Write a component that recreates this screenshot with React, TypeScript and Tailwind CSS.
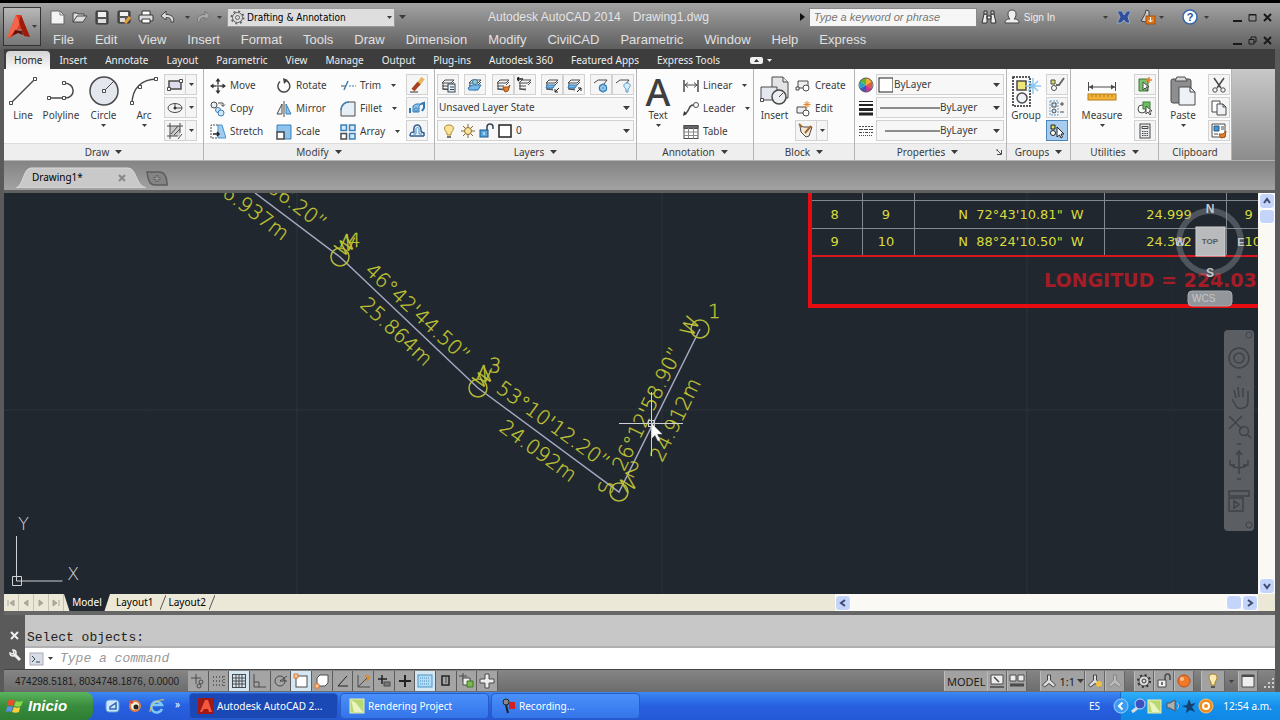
import type { ReactNode } from "react";

type IconProps = {
    w?: number;
    h?: number;
    children: ReactNode;
};

function Icon({ w = 16, h = 16, children }: IconProps) {
    return (
        <svg
            width={w}
            height={h}
            viewBox={`0 0 ${w} ${h}`}
            fill="none"
            stroke="#4a4a4a"
            aria-hidden="true"
            className="shrink-0"
        >
            {children}
        </svg>
    );
}

function Caret({ small = false }: { small?: boolean }) {
    return small ? (
        <Icon w={5} h={3}>
            <path d="M0 0h5L2.500 3z" fill="#3c3c3c" stroke="none" />
        </Icon>
    ) : (
        <Icon w={7} h={4}>
            <path d="M0 0h7L3.500 4z" fill="#3c3c3c" stroke="none" />
        </Icon>
    );
}

/* ---------- Title bar ---------- */

const menus = [
    "File", "Edit", "View", "Insert", "Format", "Tools", "Draw", "Dimension",
    "Modify", "CivilCAD", "Parametric", "Window", "Help", "Express",
];

function QuickAccess() {
    return (
        <div className="flex items-center">
            <button aria-label="New" className="flex w-[22px] justify-center">
                <Icon>
                    <path d="M1 2h9l4 4v9H1z" fill="#f4f4f4" stroke="#666" />
                    <path d="M10 2v4h4" stroke="#777" />
                </Icon>
            </button>
            <button aria-label="Open" className="flex w-[22px] justify-center">
                <Icon>
                    <path d="M1 13V4h4l1 1h6v2M1 13l4-6h10l-4 6z" fill="#ddd" stroke="#444" />
                </Icon>
            </button>
            <button aria-label="Save" className="flex w-[22px] justify-center">
                <Icon>
                    <rect x="2" y="2" width="12" height="13" rx="1" fill="#555" stroke="#333" />
                    <rect x="4" y="3" width="8" height="5" fill="#f0f0f0" stroke="none" />
                    <rect x="4" y="10" width="8" height="4" fill="#ddd" stroke="none" />
                </Icon>
            </button>
            <button aria-label="Save As" className="flex w-[22px] justify-center">
                <Icon>
                    <rect x="2" y="2" width="12" height="12" rx="1" fill="#555" stroke="#333" />
                    <rect x="4" y="3" width="8" height="4" fill="#f0f0f0" stroke="none" />
                    <rect x="4" y="9" width="5" height="4" fill="#ddd" stroke="none" />
                    <path d="M9 14l5-6" stroke="#e0a040" strokeWidth="3" />
                </Icon>
            </button>
            <button aria-label="Plot" className="flex w-[22px] justify-center">
                <Icon>
                    <path d="M4 6V2h8v4" fill="#fff" stroke="#333" />
                    <rect x="1" y="6" width="14" height="6" rx="1" fill="#ddd" stroke="#333" />
                    <path d="M4 10h8v4H4z" fill="#fff" stroke="#333" />
                </Icon>
            </button>
            <button aria-label="Undo" className="flex w-[22px] justify-center">
                <Icon>
                    <path d="M6 2L1 7l5 4V8.500c4 0 5 1 5 4.500h2.500c1-5-2-7.500-7.500-7.500z" fill="#ddd" stroke="#444" />
                </Icon>
            </button>
            <span className="flex w-4 justify-center"><Caret small /></span>
            <button aria-label="Redo" className="flex w-4 justify-center">
                <Icon>
                    <path d="M10 2l5 5-5 4V8.500c-4 0-5 1-5 4.500H2.500c-1-5 2-7.500 7.500-7.500z" fill="#a8a8a8" stroke="#777" />
                </Icon>
            </button>
            <span className="flex w-4 justify-center"><Caret small /></span>
        </div>
    );
}

function WindowButtons({ restore = false }: { restore?: boolean }) {
    return (
        <div className="flex gap-[6px]">
            <button aria-label="Minimize">
                <Icon w={9} h={9}><path d="M0 8h9" stroke="#1a1a1a" strokeWidth="2" /></Icon>
            </button>
            <button aria-label={restore ? "Restore" : "Maximize"}>
                <Icon w={9} h={9}>
                    {restore ? (
                        <path d="M3 3V1h5v5H6M1 3.500h5v4.500H1z" stroke="#1a1a1a" />
                    ) : (
                        <path d="M1 2h7M1 1.500h7v6.500H1z" stroke="#1a1a1a" />
                    )}
                </Icon>
            </button>
            <button aria-label="Close">
                <Icon w={9} h={9}><path d="M1 1l7 7M8 1L1 8" stroke="#1a1a1a" strokeWidth="2" /></Icon>
            </button>
        </div>
    );
}

function TitleBar() {
    return (
        <header className="flex h-[46px] bg-linear-to-b from-[#a4a4a4] to-[#5e5e5e] pl-[3px]">
            <button
                aria-label="Application menu"
                className="mt-1 flex h-[39px] w-[38px] shrink-0 items-center justify-center gap-px border border-[#333] bg-linear-to-b from-[#b8b8b8] to-[#777]"
            >
                <svg width="24" height="28" viewBox="0 0 24 28" aria-hidden="true">
                    <path d="M9 2h5l3 8-2 6-6 1-4 7-5 1z" fill="#e23a22" />
                    <path d="M9 2l4 8-3 6-8 8-2 1z" fill="#f4664c" />
                    <path d="M14 2l9 22-6-1-2-5-3-9z" fill="#a01a0a" />
                    <path d="M8 17l7 1 1 4-5-2-6 3z" fill="#6c0c04" />
                </svg>
                <Caret small />
            </button>
            <div className="flex min-w-0 flex-1 flex-col">
                <div className="flex h-[28px] items-center">
                    <div className="flex w-[447px] shrink-0 items-center pl-[6px]">
                        <QuickAccess />
                        <label className="flex h-[19px] w-[168px] items-center gap-[2px] border border-[#999] bg-[#dedede] px-[2px]">
                            <Icon w={15} h={15}>
                                <circle cx="7.500" cy="7.500" r="5" stroke="#666" />
                                <circle cx="7.500" cy="7.500" r="6" stroke="#666" strokeWidth="2" strokeDasharray="2 2.700" />
                                <circle cx="7.500" cy="7.500" r="2" stroke="#666" />
                            </Icon>
                            <select aria-label="Workspace" className="min-w-0 flex-1 appearance-none bg-transparent font-['DejaVu_Sans_Condensed','Liberation_Sans',sans-serif] text-[10px] text-black">
                                <option>Drafting &amp; Annotation</option>
                            </select>
                            <Caret small />
                        </label>
                        <span className="ml-1"><Caret /></span>
                    </div>
                    <h1 className="flex shrink-0 gap-3 text-[12px] text-[#e4e4e4]">
                        <span>Autodesk AutoCAD 2014</span>
                        <span>Drawing1.dwg</span>
                    </h1>
                    <div className="flex flex-1 items-center justify-end pr-2">
                        <Icon w={5} h={8}><path d="M0 0v8l5-4z" fill="#111" stroke="none" /></Icon>
                        <input
                            aria-label="Search"
                            placeholder="Type a keyword or phrase"
                            className="ml-1 h-[19px] w-[168px] border border-[#888] bg-[#f6f6f6] px-1 text-[11px] italic placeholder:text-[#777]"
                        />
                        <button aria-label="Find" className="ml-1">
                            <Icon>
                                <path d="M1 14l2-9h3v9zM15 14l-2-9h-3v9zM6 7h4v3H6z" fill="#eee" stroke="#333" />
                                <path d="M3 2h3v3H3zM10 2h3v3h-3z" fill="#ccc" stroke="#333" />
                            </Icon>
                        </button>
                        <button className="ml-[7px] flex items-center gap-1 text-[10px] text-[#f0f0f0]">
                            <Icon>
                                <path d="M8 1c6 0 4 8 2 9 4 0 5 2 5 4H1c0-2 1-4 5-4C4 9 2 1 8 1z" fill="#eee" stroke="#444" />
                            </Icon>
                            Sign In
                        </button>
                        <span className="ml-[48px]"><Caret small /></span>
                        <button aria-label="Exchange" className="ml-2">
                            <Icon>
                                <path d="M1 2h5l2 4 3-4h4l-3 6 2 6h-4l-2-3-3 3H1l3-6z" fill="#2f4f9c" stroke="#9ab" />
                            </Icon>
                        </button>
                        <button aria-label="Updates" className="ml-2 mr-[2px]">
                            <Icon w={17}>
                                <path d="M6 1l3 1v5l-3 6-5-1 4-7z" fill="#ccc" stroke="#444" />
                                <rect x="6" y="7" width="9" height="8" fill="#e07818" stroke="#a85008" />
                                <path d="M10.500 8v5M8.500 11l2 2 2-2" stroke="#fff" />
                            </Icon>
                        </button>
                        <Caret small />
                        <button aria-label="Help" className="ml-[18px] mr-[6px]">
                            <svg width="16" height="16" viewBox="0 0 16 16" aria-hidden="true">
                                <circle cx="8" cy="8" r="7" fill="#fff" stroke="#3a66a8" strokeWidth="1.500" />
                                <text x="8" y="12" textAnchor="middle" fontSize="11" fontWeight="700" fill="#1f4f9a">?</text>
                            </svg>
                        </button>
                        <Caret small />
                        <span className="ml-[24px]"><WindowButtons /></span>
                    </div>
                </div>
                <nav className="flex h-[18px] items-center pl-3 pr-2">
                    <div className="flex flex-1 gap-[21px]">
                        {menus.map((item) => (
                            <button key={item} className="text-[13px] leading-4 text-[#e0e0e0]">
                                {item}
                            </button>
                        ))}
                    </div>
                    <WindowButtons restore />
                </nav>
            </div>
        </header>
    );
}

/* ---------- Ribbon ---------- */

const ribbonTabs = [
    "Home", "Insert", "Annotate", "Layout", "Parametric", "View", "Manage",
    "Output", "Plug-ins", "Autodesk 360", "Featured Apps", "Express Tools",
];

function RibbonTabs() {
    return (
        <nav className="flex h-5 items-end bg-[#3d3d3d] pl-[2px]">
            {ribbonTabs.map((tab) => (
                <button
                    key={tab}
                    className={
                        tab === "Home"
                            ? "h-[18px] rounded-t-sm bg-linear-to-b from-[#d4d4d4] to-[#fbfbfb] px-2 text-[#222]"
                            : "h-[18px] px-[9px] text-[#eee]"
                    }
                >
                    {tab}
                </button>
            ))}
            <button aria-label="Minimize ribbon" className="ml-[21px] flex h-[18px] items-center gap-1">
                <Icon w={13} h={7}>
                    <rect width="13" height="7" rx="2" fill="#eee" stroke="none" />
                    <path d="M4 5h5L6.500 2z" fill="#333" stroke="none" />
                </Icon>
                <Icon w={5} h={3}><path d="M0 0h5L2.500 3z" fill="#eee" stroke="none" /></Icon>
            </button>
        </nav>
    );
}

type PanelProps = {
    title: string;
    className: string;
    caret?: boolean;
    launcher?: boolean;
    children: ReactNode;
};

function Panel({ title, className, caret = true, launcher = false, children }: PanelProps) {
    return (
        <section className={`flex shrink-0 flex-col border-r border-[#b4b4b4] bg-[#fcfcfc] ${className}`}>
            <div className="flex h-[74px] pt-[5px]">{children}</div>
            <div className="flex h-[17px] items-center border-t border-[#dcdcdc] bg-[#eeeeee] px-1">
                <h2 className="flex flex-1 items-center justify-center gap-[6px]">
                    {title}
                    {caret && <Caret />}
                </h2>
                {launcher && (
                    <Icon w={6} h={6}><path d="M0 1h2M5.500 1v4.500H1M1 1l4 4" /></Icon>
                )}
            </div>
        </section>
    );
}

type BigButtonProps = {
    label: string;
    className: string;
    caret?: boolean;
    children: ReactNode;
};

function BigButton({ label, className, caret = false, children }: BigButtonProps) {
    return (
        <button className={`flex shrink-0 flex-col items-center ${className}`}>
            <span className="flex h-[34px] items-center">{children}</span>
            <span className="h-[15px] leading-[15px]">{label}</span>
            {caret && <span className="mt-px"><Caret small /></span>}
        </button>
    );
}

type ToolProps = {
    label: string;
    caret?: boolean;
    children: ReactNode;
};

function Tool({ label, caret = false, children }: ToolProps) {
    return (
        <button className="flex h-[23px] items-center gap-1 whitespace-nowrap">
            <span className="flex w-4 justify-center">{children}</span>
            {label}
            {caret && <span className="ml-[6px]"><Caret small /></span>}
        </button>
    );
}

type BoxButtonProps = {
    label: string;
    split?: boolean;
    active?: boolean;
    children: ReactNode;
};

function BoxButton({ label, split = false, active = false, children }: BoxButtonProps) {
    return (
        <button
            aria-label={label}
            className={`flex h-[21px] shrink-0 items-center border ${
                active ? "border-[#4a86b8] bg-[#a6cdf0]" : "border-[#d2d2d2] bg-[#f5f5f5]"
            }`}
        >
            <span className="flex w-5 justify-center">{children}</span>
            {split && (
                <span className="flex h-full w-[11px] items-center justify-center border-l border-[#d2d2d2]">
                    <Caret small />
                </span>
            )}
        </button>
    );
}

type DropdownProps = {
    label: string;
    value: string;
    className?: string;
    children?: ReactNode;
};

function Dropdown({ label, value, className = "", children }: DropdownProps) {
    return (
        <label className={`flex h-[21px] min-w-0 items-center border border-[#d2d2d2] bg-[#f7f7f7] pl-px pr-[3px] ${className}`}>
            {children}
            <select aria-label={label} className="min-w-0 flex-1 appearance-none bg-transparent">
                <option>{value}</option>
            </select>
            <Caret />
        </label>
    );
}

function DrawPanel() {
    return (
        <Panel title="Draw" className="w-[200px]">
            <BigButton label="Line" className="w-[38px]">
                <Icon w={30} h={30}>
                    <path d="M3 27L27 3" strokeWidth="1.500" />
                    <path d="M1.500 25.500h3v3h-3zM25.500 1.500h3v3h-3z" fill="#fff" />
                </Icon>
            </BigButton>
            <BigButton label="Polyline" className="w-[38px]">
                <Icon w={30} h={30}>
                    <path d="M3 22h16c11 0 11-15-1-15" strokeWidth="1.500" />
                    <path d="M1.500 20.500h3v3h-3zM16.500 20.500h3v3h-3zM16.500 5.500h3v3h-3z" fill="#fff" />
                </Icon>
            </BigButton>
            <BigButton label="Circle" caret className="w-[47px]">
                <Icon w={30} h={30}>
                    <circle cx="15" cy="15" r="14" fill="#e4e8ee" strokeWidth="1.500" />
                    <path d="M15 15L25 5" />
                    <path d="M13.500 13.500h3v3h-3z" fill="#fff" />
                </Icon>
            </BigButton>
            <BigButton label="Arc" caret className="w-[34px]">
                <Icon w={30} h={30}>
                    <path d="M3 28C3 12 13 3 28 3" strokeWidth="1.500" />
                    <path d="M1.500 25.500h3v3h-3zM9.500 9.500h3v3h-3zM25.500 1.500h3v3h-3z" fill="#fff" />
                </Icon>
            </BigButton>
            <div className="ml-[3px] flex flex-col gap-[2px]">
                <BoxButton label="Rectangle" split>
                    <Icon>
                        <rect x="2" y="4" width="12" height="8" fill="#dde" strokeWidth="1.500" />
                        <path d="M0.500 10.500h3v3h-3zM12.500 2.500h3v3h-3z" fill="#fff" />
                    </Icon>
                </BoxButton>
                <BoxButton label="Ellipse" split>
                    <Icon>
                        <ellipse cx="8" cy="8" rx="7" ry="4.500" fill="#f2f2f2" />
                        <path d="M8 8h7M8 3v5" />
                        <circle cx="8" cy="8" r="1.500" fill="#333" stroke="none" />
                    </Icon>
                </BoxButton>
                <BoxButton label="Hatch" split>
                    <Icon>
                        <rect x="3" y="3" width="10" height="10" fill="#ccc" stroke="none" />
                        <path d="M3 0v16M13 0v10M0 3h16M0 13h11M4 11l7-8M7 12l6-6M11 16l4-5" />
                    </Icon>
                </BoxButton>
            </div>
        </Panel>
    );
}

function ModifyPanel() {
    return (
        <Panel title="Modify" className="w-[231px]">
            <div className="ml-[6px] w-[66px] shrink-0">
                <Tool label="Move">
                    <Icon>
                        <path d="M8 1v5M8 10v5M1 8h5M10 8h5" strokeWidth="1.500" />
                        <path d="M5.500 3.500L8 0l2.500 3.500zM5.500 12.500L8 16l2.500-3.500zM3.500 5.500L0 8l3.500 2.500zM12.500 5.500L16 8l-3.500 2.500z" fill="#333" stroke="none" />
                        <path d="M7 7h2v2H7z" />
                    </Icon>
                </Tool>
                <Tool label="Copy">
                    <Icon>
                        <circle cx="4" cy="4" r="3" fill="#eee" />
                        <path d="M8 2h5v3M11 3.500l2 2 2-2" />
                        <circle cx="8" cy="9" r="2.500" fill="#cfe6f8" stroke="#3a80b8" />
                        <circle cx="11" cy="12" r="3" fill="#cfe6f8" stroke="#3a80b8" />
                    </Icon>
                </Tool>
                <Tool label="Stretch">
                    <Icon>
                        <path d="M8 1h4l4 13H8z" fill="#9fcdf0" stroke="#4a94cc" />
                        <path d="M8 1H1v13h7" strokeDasharray="2 1" />
                        <path d="M3 10h6M7 8l2 2-2 2" strokeWidth="1.500" stroke="#222" />
                    </Icon>
                </Tool>
            </div>
            <div className="w-[64px] shrink-0">
                <Tool label="Rotate">
                    <Icon>
                        <path d="M10 2.500a6 6 0 1 1-6 1" strokeWidth="1.500" />
                        <path d="M7 0l5 2-4 4z" fill="#444" stroke="none" />
                    </Icon>
                </Tool>
                <Tool label="Mirror">
                    <Icon>
                        <path d="M6 3v10H1z" fill="#eee" />
                        <path d="M8 0v16" />
                        <path d="M10 3v10h5z" fill="#8cc4ee" stroke="#3a80b8" />
                    </Icon>
                </Tool>
                <Tool label="Scale">
                    <Icon>
                        <path d="M1 1h14v14H8V8H1z" fill="#8cc4ee" stroke="#3a80b8" />
                        <rect x="1" y="8" width="7" height="7" fill="#fff" strokeWidth="1.500" />
                    </Icon>
                </Tool>
            </div>
            <div className="w-[66px] shrink-0">
                <Tool label="Trim" caret>
                    <Icon>
                        <path d="M1 8h5" />
                        <path d="M4 12l4-9" stroke="#3a80b8" strokeWidth="1.500" />
                        <path d="M9 8h7" stroke="#3a80b8" strokeDasharray="2 1" />
                    </Icon>
                </Tool>
                <Tool label="Fillet" caret>
                    <Icon>
                        <path d="M1 15V9c0-5 4-8 8-8h6v14z" fill="#e6eef6" />
                        <path d="M1 9c0-5 4-8 8-8" stroke="#3a80b8" strokeWidth="1.500" />
                    </Icon>
                </Tool>
                <Tool label="Array" caret>
                    <Icon>
                        <path d="M1 9.500h5.500V15H1z" fill="#fff" strokeWidth="1.500" />
                        <path d="M1 1h5.500v5.500H1zM9.500 1H15v5.500H9.500zM9.500 9.500H15V15H9.500z" fill="#d4e9f9" stroke="#3a80b8" strokeWidth="1.500" />
                    </Icon>
                </Tool>
            </div>
            <div className="flex flex-col gap-[2px]">
                <BoxButton label="Erase">
                    <Icon>
                        <path d="M9 8l5-7" stroke="#e8b860" strokeWidth="4" />
                        <path d="M4 13l6-7" stroke="#a84020" strokeWidth="4" />
                        <path d="M1 15h8" stroke="#333" />
                    </Icon>
                </BoxButton>
                <BoxButton label="Explode">
                    <Icon>
                        <path d="M4 6l3-2h5l-2 2v6H4z" fill="#8cc4ee" stroke="#2f78b4" />
                        <path d="M1 8v5M12 4l3-1v5l-2 3" stroke="#2f78b4" strokeWidth="2" />
                        <path d="M6 8h2v3H6z" fill="#fff" stroke="#2f78b4" />
                    </Icon>
                </BoxButton>
                <BoxButton label="Offset">
                    <Icon>
                        <path d="M1 13h14M1 13c0-4 2-4 4-4-2-9 7-9 7-2 0 2 0 2 3 3v3" stroke="#2f5f90" strokeWidth="1.500" />
                        <path d="M4 11h3V6c0-2 3-2 3 0v5h3" stroke="#3a90d0" />
                    </Icon>
                </BoxButton>
            </div>
        </Panel>
    );
}

function Sheets({ accent }: { accent?: ReactNode }) {
    return (
        <Icon>
            <path d="M5 3h9l-3 3H2zM2 9h7M2 12h7M11 8l3-3" fill="#f4f4f4" />
            <path d="M3 6v6l6 1" />
            {accent}
        </Icon>
    );
}

const blue = "#2f78b4";

function LayersPanel() {
    return (
        <Panel title="Layers" className="w-[202px]">
            <div className="mx-[2px] flex flex-1 flex-col gap-[2px]">
                <div className="flex justify-between">
                    <BoxButton label="Layer Properties">
                        <Sheets accent={<><rect x="8" y="7" width="7" height="8" fill="#e8eef4" stroke="#345" /><path d="M10 10h4M10 12.500h4" stroke="#345" /></>} />
                    </BoxButton>
                    <BoxButton label="Make Current">
                        <Sheets accent={<><path d="M1 11l4-3h9l-3 5H2z" fill="#7ab8e8" stroke={blue} /><circle cx="8" cy="5" r="2.500" fill="#9cc" stroke={blue} /></>} />
                    </BoxButton>
                    <div className="flex">
                        <BoxButton label="Match">
                            <Sheets accent={<path d="M8 10l5 0 2-2-2 6-3 1z" fill="#e08030" stroke="#a05018" />} />
                        </BoxButton>
                        <BoxButton label="Previous">
                            <Sheets accent={<path d="M0 2h6M2 0L0 2l2 2" stroke="#222" strokeWidth="1.500" />} />
                        </BoxButton>
                    </div>
                    <div className="flex">
                        <BoxButton label="Isolate">
                            <Sheets accent={<><path d="M3 8h8l-2 3H2z" fill="#7ab8e8" stroke={blue} /><path d="M15 11l-4 4M11 12v3h3" stroke="#222" /></>} />
                        </BoxButton>
                        <BoxButton label="Unisolate">
                            <Sheets accent={<><path d="M3 8h8l-2 3H2z" fill="#7ab8e8" stroke={blue} /><path d="M11 15l4-4M12 11h3v3" stroke="#222" /></>} />
                        </BoxButton>
                    </div>
                    <div className="flex">
                        <BoxButton label="Freeze">
                            <Icon>
                                <path d="M1 6l4-3h9l-3 4" fill="#f4f4f4" />
                                <circle cx="10" cy="11" r="3.500" fill="#d4ebfa" stroke={blue} strokeWidth="1.500" />
                                <path d="M10 6v10M6 8.500l8 5M6 13.500l8-5" stroke="#5aa4dc" />
                            </Icon>
                        </BoxButton>
                        <BoxButton label="Off">
                            <Icon>
                                <path d="M1 6l4-3h9l-3 4" fill="#f4f4f4" />
                                <path d="M12 6c-4 0-4 4-1 6v3h2v-3c3-2 3-6-1-6z" fill="#d4ebfa" stroke="#5a9ccc" />
                            </Icon>
                        </BoxButton>
                    </div>
                </div>
                <Dropdown label="Layer state" value="Unsaved Layer State" />
                <Dropdown label="Layer" value="0" className="gap-1">
                    <Icon w={18}>
                        <path d="M10 2C4 2 5 7 8 10v2h4v-2c3-3 4-8-2-8z" fill="#fbe49a" stroke="#b08a30" />
                        <path d="M8 13h4v2H8z" fill="#777" stroke="none" />
                    </Icon>
                    <Icon w={14}>
                        <circle cx="7" cy="8" r="3.500" fill="#fbe49a" stroke="#8a6a30" />
                        <path d="M7 1v3M7 12v3M0 8h3M11 8h3M2 3l2 2M10 11l2 2M2 13l2-2M10 5l2-2" stroke="#8a6a30" />
                    </Icon>
                    <Icon w={15}>
                        <rect x="1" y="7" width="8" height="7" fill="#5aa4dc" stroke="#225a8a" />
                        <path d="M8 7V4c0-4 6-4 6 0v2" stroke="#345" strokeWidth="1.500" />
                        <path d="M5 9v3" stroke="#fff" />
                    </Icon>
                    <Icon w={14}><rect x="1" y="2" width="12" height="12" fill="#fff" stroke="#222" strokeWidth="1.500" /></Icon>
                </Dropdown>
            </div>
        </Panel>
    );
}

function AnnotationPanel() {
    return (
        <Panel title="Annotation" className="w-[117px]">
            <BigButton label="Text" caret className="w-[42px]">
                <span className="font-['Noto_Sans',sans-serif] text-[38px] font-medium leading-[34px] text-[#3f3f3f]">A</span>
            </BigButton>
            <div className="ml-[4px]">
                <Tool label="Linear" caret>
                    <Icon>
                        <path d="M1 2v12M15 2v12" strokeWidth="1.500" />
                        <path d="M2 7h12M5 4.500L2 7l3 2.500M11 4.500L14 7l-3 2.500" />
                    </Icon>
                </Tool>
                <Tool label="Leader" caret>
                    <Icon>
                        <circle cx="13" cy="4" r="2.500" fill="#fff" />
                        <path d="M10 4C5 4 8 9 2 13" strokeWidth="1.500" />
                        <path d="M0 15l1-5 3 3z" fill="#333" stroke="none" />
                    </Icon>
                </Tool>
                <Tool label="Table">
                    <Icon>
                        <rect x="1" y="1.500" width="14" height="13" fill="#fff" />
                        <path d="M1 1.500h14v3H1z" fill="#666" />
                        <path d="M5.500 4v10.500M10.500 4v10.500M1 8h14M1 11.500h14" stroke="#888" />
                    </Icon>
                </Tool>
            </div>
        </Panel>
    );
}

function BlockPanel() {
    return (
        <Panel title="Block" className="w-[101px]">
            <BigButton label="Insert" className="w-[41px]">
                <Icon w={30} h={30}>
                    <path d="M12 1h11l5 5v16H12z" fill="#e4e4e6" />
                    <path d="M23 1v5h5M1 11h16v13H1z" fill="#e4e8ee" />
                    <circle cx="19" cy="21" r="7" fill="#eceef2" strokeWidth="1.500" />
                    <path d="M19 21l4-4" />
                    <path d="M0.500 22.500h3v3h-3z" fill="#fff" />
                </Icon>
            </BigButton>
            <div className="flex flex-col items-start">
                <Tool label="Create">
                    <Icon>
                        <path d="M3 3h10v7H3z" fill="#eee" />
                        <circle cx="11" cy="10" r="3" fill="#fff" />
                        <path d="M1 9h3v3H1z" fill="#fff" />
                    </Icon>
                </Tool>
                <Tool label="Edit">
                    <Icon>
                        <path d="M2 6h9v6H2z" fill="#eee" />
                        <circle cx="11" cy="12" r="3" fill="#fff" />
                        <path d="M12 0v7M8.500 3.500h7M9.500 1l5 5M14.500 1l-5 5" stroke="#e8862a" />
                    </Icon>
                </Tool>
                <BoxButton label="Edit Attributes" split>
                    <Icon>
                        <path d="M2 3l4 1h8l-3 9-3 1-5-5z" fill="#f4ead8" />
                        <path d="M1 1l3 3M7 10l6-7" stroke="#a8682a" strokeWidth="2" />
                    </Icon>
                </BoxButton>
            </div>
        </Panel>
    );
}

function PropertiesPanel() {
    return (
        <Panel title="Properties" launcher className="w-[152px]">
            <div className="flex w-[21px] shrink-0 flex-col items-center gap-[2px] pl-px">
                <span className="flex h-[21px] items-center">
                    <Icon>
                        <path d="M8 8V1a7 7 0 0 1 6 3.500z" fill="#f0b030" stroke="none" />
                        <path d="M8 8l6-3.500v7z" fill="#e85828" stroke="none" />
                        <path d="M8 8l6 3.500A7 7 0 0 1 8 15z" fill="#c83890" stroke="none" />
                        <path d="M8 8v7a7 7 0 0 1-6-3.500z" fill="#3858c8" stroke="none" />
                        <path d="M8 8l-6 3.500v-7z" fill="#28a0b8" stroke="none" />
                        <path d="M8 8L2 4.500A7 7 0 0 1 8 1z" fill="#58b838" stroke="none" />
                        <circle cx="8" cy="8" r="7" stroke="#555" />
                    </Icon>
                </span>
                <span className="flex h-[21px] items-center">
                    <Icon>
                        <path d="M1 1.500h14" stroke="#222" />
                        <path d="M1 5h14" stroke="#222" strokeWidth="2" />
                        <path d="M1 9.500h14" stroke="#222" strokeWidth="3" />
                        <path d="M1 14h14" stroke="#222" strokeWidth="3" />
                    </Icon>
                </span>
                <span className="flex h-[21px] items-center">
                    <Icon>
                        <path d="M1 3.500h14" strokeDasharray="2 1" />
                        <path d="M1 6.500h14" strokeDasharray="4 1" />
                        <path d="M1 9.500h14" strokeDasharray="3 1 1 1" />
                        <path d="M1 12.500h14" strokeDasharray="1 1" />
                    </Icon>
                </span>
            </div>
            <div className="mr-[2px] flex min-w-0 flex-1 flex-col gap-[2px]">
                <Dropdown label="Color" value="ByLayer" className="gap-px">
                    <Icon w={15}><rect x="1" y="1" width="14" height="14" fill="#fff" stroke="#222" /></Icon>
                </Dropdown>
                <Dropdown label="Lineweight" value="ByLayer">
                    <Icon w={62}><path d="M2 8h60" stroke="#222" /></Icon>
                </Dropdown>
                <Dropdown label="Linetype" value="ByLayer">
                    <Icon w={62}><path d="M7 8h55" stroke="#222" /></Icon>
                </Dropdown>
            </div>
        </Panel>
    );
}

function GroupsPanel() {
    return (
        <Panel title="Groups" className="w-[64px]">
            <BigButton label="Group" className="w-[38px]">
                <Icon w={30} h={32}>
                    <path d="M2 2h17v29H2z" stroke="#222" strokeDasharray="2 1" strokeWidth="1.500" />
                    <rect x="6" y="6" width="9" height="9" fill="#f0e678" strokeWidth="1.500" />
                    <circle cx="11" cy="23" r="5" fill="#eef2f8" strokeWidth="1.500" />
                    <path d="M22 3v16M14 11h16M17 6l10 10M27 6L17 16" stroke="#8cc8ee" strokeWidth="1.500" />
                </Icon>
            </BigButton>
            <div className="ml-px flex flex-col gap-[2px]">
                <BoxButton label="Ungroup">
                    <Icon>
                        <path d="M2 3h4v4H2z" fill="#d8e060" />
                        <circle cx="5" cy="11" r="2.500" fill="#fff" />
                        <path d="M7 8h3l5-7" stroke="#666" strokeWidth="2" />
                    </Icon>
                </BoxButton>
                <BoxButton label="Group Edit">
                    <Icon>
                        <path d="M1 1h8v14H1z" stroke="#5a9ccc" strokeDasharray="2 1" />
                        <path d="M3 3h4v4H3z" fill="#cfe6f8" />
                        <circle cx="5" cy="11" r="2" fill="#cfe6f8" />
                        <path d="M11 4h4M13 2v4M11 12h4" />
                    </Icon>
                </BoxButton>
                <BoxButton label="Group Selection" active>
                    <Icon>
                        <path d="M2 2h4v4H2z" fill="#d8e060" stroke="#222" />
                        <circle cx="4" cy="10" r="2.500" fill="#fff" stroke="#222" />
                        <path d="M8 4v10l2.500-2 1.500 3 1.500-1-1.500-3H15z" fill="#fff" stroke="#222" />
                    </Icon>
                </BoxButton>
            </div>
        </Panel>
    );
}

function UtilitiesPanel() {
    return (
        <Panel title="Utilities" className="w-[88px]">
            <BigButton label="Measure" caret className="w-[62px]">
                <Icon w={30} h={30}>
                    <path d="M1.500 6v9M28.500 6v9M2 11h26" />
                    <path d="M2 11l4-2.500v5zM28 11l-4-2.500v5z" fill="#4a4a4a" stroke="none" />
                    <rect x="1" y="18" width="28" height="6" fill="#f2b438" stroke="#b87c18" />
                    <path d="M5 18v3M9 18v3M13 18v3M17 18v3M21 18v3M25 18v3" stroke="#b87c18" />
                </Icon>
            </BigButton>
            <div className="ml-px flex flex-col gap-[2px]">
                <BoxButton label="Select All">
                    <Icon>
                        <path d="M2 2h9v12H2z" fill="#7cc070" stroke="#3a7a38" />
                        <path d="M12 0v6M9 3h6" stroke="#f08020" strokeWidth="1.500" />
                        <path d="M6 5v8l2-2 2 3 1-1-2-3h3z" fill="#fff" />
                    </Icon>
                </BoxButton>
                <BoxButton label="Quick Select">
                    <Icon>
                        <circle cx="5" cy="9" r="4" fill="#fff" />
                        <rect x="6" y="2" width="7" height="7" fill="#6cc060" stroke="#3a7a38" />
                        <path d="M9 6v8l2-2 2 3 1-1-2-3h3z" fill="#fff" />
                    </Icon>
                </BoxButton>
                <BoxButton label="Calculator">
                    <Icon>
                        <rect x="3" y="1" width="10" height="14" fill="#e8eaee" />
                        <path d="M5 3.500h6v2H5z" />
                        <path d="M5 8.500h6M5 10.500h6M5 12.500h6" strokeDasharray="1.500 0.800" />
                    </Icon>
                </BoxButton>
            </div>
        </Panel>
    );
}

function ClipboardPanel() {
    return (
        <Panel title="Clipboard" caret={false} className="w-[73px]">
            <BigButton label="Paste" caret className="w-[48px]">
                <Icon w={26} h={30}>
                    <rect x="1" y="3" width="20" height="24" rx="2" fill="#8e8e90" />
                    <path d="M5 5h12l-2-4H7z" fill="#d8d8d8" />
                    <path d="M9 11h11l5 5v13H9z" fill="#eef1f5" />
                    <path d="M20 11v5h5" />
                </Icon>
            </BigButton>
            <div className="ml-px flex flex-col gap-[2px]">
                <BoxButton label="Cut">
                    <Icon>
                        <path d="M3 1l7 10M13 1L6 11" strokeWidth="1.500" />
                        <circle cx="4" cy="13" r="2.200" />
                        <circle cx="12" cy="13" r="2.200" />
                    </Icon>
                </BoxButton>
                <BoxButton label="Copy Clip">
                    <Icon>
                        <path d="M1 1h8v11H1z" fill="#fff" />
                        <path d="M6 4h6l3 3v8H6z" fill="#eef1f5" />
                        <path d="M12 4v3h3" />
                    </Icon>
                </BoxButton>
                <BoxButton label="Match Properties">
                    <Icon>
                        <path d="M1 1h13v13H1z" fill="#fff" />
                        <path d="M3 3h5v5H3z" fill="#4a94cc" stroke="#225a8a" />
                        <path d="M10 4h3M10 6h3M3 11h4" />
                        <path d="M8 11h4l3-3-1 6-4 1z" fill="#e08030" stroke="#a05018" />
                    </Icon>
                </BoxButton>
            </div>
        </Panel>
    );
}

function Ribbon() {
    return (
        <div className="flex bg-linear-to-b from-[#c8c8c8] to-[#8c8c8c] text-[#3c3c3c]">
            <DrawPanel />
            <ModifyPanel />
            <LayersPanel />
            <AnnotationPanel />
            <BlockPanel />
            <PropertiesPanel />
            <GroupsPanel />
            <UtilitiesPanel />
            <ClipboardPanel />
        </div>
    );
}

function FileTabs() {
    return (
        <div className="flex h-[30px] items-end border-t border-[#b4b4b4] bg-linear-to-b from-[#848484] to-[#a2a2a2] pb-[2px] pl-3">
            <div className="relative flex h-[21px] w-[130px] items-center justify-between pl-4 pr-5">
                <svg
                    viewBox="0 0 130 21"
                    preserveAspectRatio="none"
                    className="absolute inset-0 h-full w-full"
                    aria-hidden="true"
                >
                    <path d="M0 21C8 18 7 1 15 1H112C121 1 119 18 130 21z" fill="#c9c9c9" stroke="#d8d8d8" />
                </svg>
                <button className="relative text-black">Drawing1*</button>
                <button aria-label="Close drawing" className="relative">
                    <Icon w={8} h={8}><path d="M1 1l6 6M7 1L1 7" stroke="#888" strokeWidth="2" /></Icon>
                </button>
            </div>
            <button aria-label="New drawing" className="mb-px">
                <Icon w={24} h={17}>
                    <path d="M1 2h12c6 0 8 6 8 13H9C3 15 2 9 1 2z" fill="#848484" stroke="#5c5c5c" strokeWidth="1.500" />
                    <path d="M11 5v7M7.500 8.500h7" stroke="#6a6a6a" strokeWidth="3" />
                    <path d="M11 6v5M8.500 8.500h5" stroke="#a0a0a0" />
                </Icon>
            </button>
        </div>
    );
}

/* ---------- Drawing area ---------- */

type CadLabel = {
    text: string;
    x: number;
    y: number;
    angle: number;
};

const bearings: CadLabel[] = [
    { text: "86.20”", x: 262, y: -3, angle: 37 },
    { text: "6.937m", x: 217, y: 2, angle: 37 },
    { text: "46°42'44.50”", x: 360, y: 79, angle: 43 },
    { text: "25.864m", x: 355, y: 113, angle: 43 },
    { text: "53°10'12.20”", x: 491, y: 198, angle: 36 },
    { text: "24.092m", x: 494, y: 237, angle: 36 },
    { text: "26°12'58.90”", x: 620, y: 279, angle: -64 },
    { text: "24.912m", x: 658, y: 270, angle: -64 },
];

const stationLabels: CadLabel[] = [
    { text: "4", x: 344, y: 54, angle: 0 },
    { text: "N", x: 334, y: 53, angle: 25 },
    { text: "W", x: 338, y: 65, angle: -40 },
    { text: "3", x: 484, y: 179, angle: 5 },
    { text: "N", x: 471, y: 184, angle: 25 },
    { text: "W", x: 476, y: 197, angle: -40 },
    { text: "2", x: 620, y: 280, angle: 25 },
    { text: "S", x: 608, y: 302, angle: -80 },
    { text: "N", x: 621, y: 301, angle: -30 },
    { text: "W", x: 688, y: 145, angle: -64 },
    { text: "1", x: 704, y: 125, angle: 0 },
];

const stations = [
    [336, 64],
    [474, 195],
    [615, 299],
    [696, 136],
];

const tableRows = [
    ["8", "9", "N  72°43'10.81\"  W", "24.999", "9"],
    ["9", "10", "N  88°24'10.50\"  W", "24.382", "10"],
];

function CoordinateTable() {
    return (
        <table className="absolute left-[804px] top-0 w-[520px] table-fixed border-collapse border-4 border-t-0 border-[#e80c10] font-['DejaVu_Sans',sans-serif] text-[13px] text-[#d8dc3c]">
            <colgroup>
                <col className="w-[52px]" />
                <col className="w-[52px]" />
                <col className="w-[190px]" />
                <col className="w-[122px]" />
                <col />
            </colgroup>
            <tbody>
                <tr className="h-[7px] border-b border-[#848890]">
                    {tableRows[0].map((_, i) => (
                        <td key={i} className="border-r border-[#848890]" />
                    ))}
                </tr>
                {tableRows.map((row, r) => (
                    <tr
                        key={row[0]}
                        className={
                            r === tableRows.length - 1
                                ? "h-7 border-b-2 border-[#d81820]"
                                : "h-7 border-b border-[#848890]"
                        }
                    >
                        <td className="border-r border-r-[#848890] pr-1 text-center">{row[0]}</td>
                        <td className="border-r border-r-[#848890] pr-1 text-center">{row[1]}</td>
                        <td className="whitespace-pre border-r border-r-[#848890] pl-6 text-center">{row[2]}</td>
                        <td className="border-r border-r-[#848890] pl-2 text-center">{row[3]}</td>
                        <td className="pl-[18px]">{row[4]}</td>
                    </tr>
                ))}
                <tr className="h-[50px]">
                    <td colSpan={5} className="whitespace-nowrap pl-[232px] text-[19px] font-bold text-[#a41c26]">
                        LONGITUD = 224.03
                    </td>
                </tr>
            </tbody>
        </table>
    );
}

function ViewCube() {
    return (
        <div className="absolute right-[12px] top-2 w-[72px]">
            <svg width="72" height="106" viewBox="-3 0 72 106" className="block font-['Liberation_Sans',sans-serif]" aria-label="View cube">
                <circle cx="33" cy="41" r="31" fill="none" stroke="#8a8f96" strokeOpacity="0.45" strokeWidth="6" />
                <rect x="19" y="26" width="29" height="29" fill="#b9babc" stroke="#d0d0d0" />
                <g textAnchor="middle" fontWeight="700" fill="#c4c8cc">
                    <text x="33" y="12" fontSize="12">N</text>
                    <text x="33" y="76" fontSize="12">S</text>
                    <text x="3" y="45" fontSize="11">W</text>
                    <text x="64" y="45" fontSize="11">E</text>
                    <text x="33" y="43" fontSize="8" fill="#55585c">TOP</text>
                </g>
                <rect x="11" y="90" width="44" height="15" rx="4" fill="#93969b" stroke="#a6a9ad" />
                <text x="15" y="101" fontSize="10" fill="#c4c7ca">WCS</text>
            </svg>
        </div>
    );
}

function NavigationBar() {
    return (
        <div className="absolute right-1 top-[137px]">
            <svg width="30" height="201" viewBox="0 0 30 201" fill="none" stroke="#3e4349" strokeWidth="1.500" aria-label="Navigation bar">
                <rect width="30" height="201" rx="4" fill="#5b5f64" stroke="none" />
                <circle cx="25" cy="5" r="3" strokeWidth="1" />
                <circle cx="15" cy="28" r="10" />
                <circle cx="15" cy="28" r="5" />
                <path d="M13 47h4M13 114h4M13 149h4" />
                <path d="M8 69l4 7c2 4 12 3 12-4V61M12 68l-2-8M15 67l-1-10M19 67v-9" />
                <path d="M5 86l13 13M18 86L5 99" />
                <circle cx="20" cy="101" r="4.500" />
                <path d="M23 104l4 4M15 122v22M6 134c4 5 14 5 18 0M12 125l3-4 3 4M6 130v5h5M24 130v5h-5" />
                <path d="M5 161h20v5H5zM5 168h14v13H5zM10 171v7l5-3.500z" />
                <circle cx="25" cy="195" r="3" strokeWidth="1" />
            </svg>
        </div>
    );
}

function DrawingArea() {
    return (
        <main className="relative min-h-[401px] min-w-0 flex-1 overflow-hidden bg-[#20272f]">
            <svg
                className="absolute inset-0 h-full w-full font-['DejaVu_Sans',sans-serif]"
                fill="none"
                role="img"
                aria-label="Survey traverse"
            >
                <path d="M293 0v900M658 0v900M1023 0v900M0 217h3000" stroke="#2c343c" />
                <path d="M146 0v900M1168 0v900" stroke="#242b33" />
                <path d="M251 0L336 64L474 195L615 299L696 136" stroke="#a6a8c0" strokeWidth="1.500" />
                <g stroke="#b4b838" strokeWidth="1.500">
                    {stations.map(([cx, cy]) => (
                        <circle key={cx} cx={cx} cy={cy} r="9" />
                    ))}
                </g>
                <g fill="#c4c834" stroke="#c4c834" strokeWidth="0.300" fontWeight="200" fontSize="20">
                    {bearings.map(({ text, x, y, angle }) => (
                        <text key={text} transform={`translate(${x} ${y}) rotate(${angle})`}>{text}</text>
                    ))}
                    {stationLabels.map(({ text, x, y, angle }) => (
                        <text key={`${text}${x}`} transform={`translate(${x} ${y}) rotate(${angle})`}>{text}</text>
                    ))}
                </g>
                <g stroke="#d0d2d6">
                    <path d="M615 230.500h64M647.500 199v64" />
                    <rect x="644.500" y="227.500" width="6" height="6" />
                    <path d="M12.500 343v45h46M8.500 383.500h9v9h-9z" />
                </g>
                <g fill="#d0d2d6" fontWeight="200" fontSize="18">
                    <text x="14" y="337">Y</text>
                    <text x="63" y="387">X</text>
                </g>
                <path d="M648 231v14l3-3 3 6 2-1-3-6h5z" fill="#fff" stroke="#ccc" strokeWidth="0.500" />
            </svg>
            <CoordinateTable />
            <ViewCube />
            <NavigationBar />
        </main>
    );
}

function ScrollArrow({ d, label }: { d: string; label: string }) {
    return (
        <button aria-label={label} className="flex h-4 w-4 shrink-0 items-center justify-center rounded-sm border border-white bg-[#c4d4fa]">
            <Icon w={8} h={8}><path d={d} stroke="#3c4c70" strokeWidth="2" /></Icon>
        </button>
    );
}

const navGlyphs = ["M7 1L3 4l4 3zM1 1v6", "M6 1L2 4l4 3z", "M2 1l4 3-4 3z", "M1 1l4 3-4 3zM7 1v6"];

function LayoutTabs() {
    return (
        <div className="flex h-[17px] items-stretch bg-[#ece8d8] text-black">
            <div className="flex w-[60px] shrink-0">
                {navGlyphs.map((d) => (
                    <button key={d} aria-label="Scroll layouts" className="flex flex-1 items-center justify-center border-r border-[#c8c4b4]">
                        <Icon w={8} h={8}><path d={d} fill="#aaa69a" stroke="#aaa69a" /></Icon>
                    </button>
                ))}
            </div>
            <button className="w-[46px] bg-[#20272f] text-white [clip-path:polygon(0_0,100%_0,88%_100%,12%_100%)]">Model</button>
            <button className="px-[6px]">Layout1</button>
            <Icon w={6} h={17}><path d="M0 16L6 1" stroke="#555" /></Icon>
            <button className="px-[3px]">Layout2</button>
            <Icon w={6} h={17}><path d="M0 16L6 1" stroke="#555" /></Icon>
            <div className="flex-1" />
            <div className="flex w-[423px] items-center bg-[#faf9f4]">
                <ScrollArrow label="Scroll left" d="M6 1L2 4l4 3" />
                <div className="flex-1" />
                <span className="h-[15px] w-4 rounded-sm border border-white bg-[#c4d4fa]" />
                <ScrollArrow label="Scroll right" d="M2 1l4 3-4 3" />
            </div>
            <div className="w-[17px]" />
        </div>
    );
}

function CommandLine() {
    return (
        <div className="flex h-[58px] border-t-4 border-[#666] font-['Liberation_Mono',monospace] text-[13px]">
            <div className="flex w-[21px] shrink-0 flex-col items-center gap-2 bg-[#5a5a5a] pt-4">
                <button aria-label="Close command line">
                    <Icon w={9} h={9}><path d="M1 1l7 7M8 1L1 8" stroke="#eee" strokeWidth="2" /></Icon>
                </button>
                <button aria-label="Customize">
                    <Icon w={14} h={14}>
                        <path d="M12 12L6 6" stroke="#eee" strokeWidth="3" />
                        <path d="M2 5a3 3 0 1 0 3-3l1 3-1 1z" stroke="#eee" strokeWidth="1.500" />
                    </Icon>
                </button>
            </div>
            <div className="flex min-w-0 flex-1 flex-col">
                <output className="flex flex-1 items-end border-b-2 border-[#b0b0b0] bg-[#c7c7c7] pb-px pl-[2px] text-[#222]">
                    Select objects:
                </output>
                <label className="flex h-[21px] items-center gap-1 bg-white pl-1">
                    <Icon w={15} h={14}>
                        <rect x="1" y="1" width="13" height="12" fill="#d6dde4" stroke="#aab" />
                        <path d="M3 4l3 3-3 3M7 10h4" stroke="#345" />
                    </Icon>
                    <Caret small />
                    <input aria-label="Command" placeholder="Type a command" className="ml-[3px] flex-1 italic placeholder:text-[#999]" />
                </label>
            </div>
        </div>
    );
}

/* ---------- Status bar ---------- */

type StatusToggle = {
    label: string;
    on?: boolean;
    icon: ReactNode;
};

const toggles: StatusToggle[] = [
    { label: "Infer", icon: <><path d="M6 1v10M1 5h10" /><circle cx="11" cy="9" r="2" /><circle cx="9" cy="13" r="2" /></> },
    { label: "Snap", icon: <path d="M2 4h10M2 8h10M2 12h10M13 3v10" strokeDasharray="1 2" strokeWidth="1.500" /> },
    { label: "Grid", on: true, icon: <path d="M1 1.500h14M1 5h14M1 8h14M1 11h14M1 14.500h14M1.500 1v14M5 1v14M8 1v14M11 1v14M14.500 1v14" /> },
    { label: "Ortho", icon: <path d="M2 1v13h12M2 9h5v5" /> },
    { label: "Polar", icon: <><circle cx="7" cy="8" r="5" /><path d="M7 8h7M7 8l7-5M11 5v3" /></> },
    { label: "Osnap", on: true, icon: <><rect x="3" y="3" width="11" height="11" fill="#fff" /><path d="M1 1h4v4H1z" fill="#f8c8a0" stroke="#e07830" /></> },
    { label: "3D Osnap", icon: <><path d="M3 5l3-3h8v8l-3 3H3z" fill="#fff" /><path d="M1 11h4v4H1z" fill="#f8c8a0" stroke="#e07830" /></> },
    { label: "Otrack", icon: <path d="M12 3L3 13h10" stroke="#222" /> },
    { label: "Ducs", icon: <><path d="M3 2v12h12M3 14l9-9" /><path d="M10 3l4 1-2 4" stroke="#e08a28" strokeWidth="2" /></> },
    { label: "Dyn", icon: <><path d="M6 2v9M2 6h9" stroke="#222" strokeWidth="1.500" /><rect x="8" y="9" width="6" height="4" fill="#777" /></> },
    { label: "Lwt", icon: <path d="M8 2v12M2 8h12" stroke="#222" strokeWidth="2" /> },
    { label: "Tpy", on: true, icon: <><rect x="1" y="2" width="14" height="12" fill="#b4dcf4" stroke="#4a94c4" /><path d="M3 5h10M3 8h10M3 11h10" stroke="#4a94c4" strokeDasharray="1 1" /></> },
    { label: "Qp", icon: <><rect x="4" y="3" width="7" height="9" stroke="#222" strokeWidth="1.500" /><path d="M7 5h2M7 7h2M7 9h2" /></> },
    { label: "Sc", icon: <><path d="M4 0v8M0 3h8" /><path d="M4 5h7v7H4z" fill="#eee" /><path d="M8 8h6v6H8z" fill="#7cb850" stroke="#3f7a28" /></> },
    { label: "Am", icon: <path d="M6 1h4v5h5v4h-5v5H6v-5H1V6h5z" fill="#eee" /> },
];

function StatusButton({ label, children }: { label: string; children: ReactNode }) {
    return (
        <button
            aria-label={label}
            className="flex h-5 min-w-5 shrink-0 items-center justify-center gap-[2px] border-x border-r-[#666] border-l-[#bbb] bg-[#a2a2a2]"
        >
            {children}
        </button>
    );
}

const person = "M6.500 2h3v5l5 5-2 2L8 10.500 3.500 14l-2-2 5-5z";

function StatusBar() {
    return (
        <div className="flex h-[23px] items-center border-t border-[#444] bg-linear-to-b from-[#858585] to-[#6c6c6c] text-[#1c1c1c]">
            <span className="w-[184px] shrink-0 pl-[11px] font-['Liberation_Sans',sans-serif] text-[10px]">
                474298.5181, 8034748.1876, 0.0000
            </span>
            <div className="flex h-5 w-[310px] shrink-0">
                {toggles.map(({ label, on, icon }) => (
                    <button
                        key={label}
                        aria-label={label}
                        aria-pressed={Boolean(on)}
                        className={`flex flex-1 items-center justify-center border-r border-[#5c5c5c] ${
                            on ? "bg-[#d4e6f2]" : "bg-[#a4a4a4]"
                        }`}
                    >
                        <Icon>{icon}</Icon>
                    </button>
                ))}
            </div>
            <div className="flex flex-1 items-center justify-end">
                <button className="h-5 border-l border-[#bbb] bg-[#a2a2a2] px-[2px] text-[11px]">MODEL</button>
                <StatusButton label="Layout"><Icon><path d="M2 2h12v9H2z" fill="#eee" /><path d="M1 14h14M5 4l5 5" strokeWidth="1.500" /></Icon></StatusButton>
                <StatusButton label="Quick View"><Icon><path d="M1 2h6v6H1zM9 2h6v6H9z" fill="#eee" /><path d="M1 12h14" strokeWidth="3" /></Icon></StatusButton>
                <span className="w-[13px]" />
                <StatusButton label="Annotation scale">
                    <Icon><path d={person} fill="#ddd" stroke="#444" /></Icon>
                    <span className="text-[11px]">1:1</span>
                    <Caret />
                </StatusButton>
                <StatusButton label="Annotation visibility"><Icon><path d={person} fill="#ddd" stroke="#444" /><circle cx="12" cy="11" r="3" fill="#f0c040" stroke="none" /></Icon></StatusButton>
                <StatusButton label="Auto scale"><Icon><path d={person} fill="#bbb" stroke="#888" /></Icon></StatusButton>
                <span className="w-[9px]" />
                <StatusButton label="Workspace">
                    <Icon>
                        <circle cx="8" cy="8" r="5" fill="#ddd" />
                        <circle cx="8" cy="8" r="6" stroke="#333" strokeWidth="2" strokeDasharray="2 2.700" />
                        <circle cx="8" cy="8" r="2" stroke="#333" />
                    </Icon>
                </StatusButton>
                <StatusButton label="Lock"><Icon><path d="M2 7h8v7H2z" fill="#eee" /><path d="M9 7V4c0-4 5-4 5 0v3M6 9v3" strokeWidth="1.500" /></Icon></StatusButton>
                <StatusButton label="Hardware"><Icon><circle cx="8" cy="8" r="6" fill="#f07828" stroke="#c04c10" /><circle cx="6" cy="6" r="2" fill="#fcc090" stroke="none" /></Icon></StatusButton>
                <span className="w-[7px]" />
                <StatusButton label="Isolate objects">
                    <Icon w={22}>
                        <path d="M11 1C5 1 7 7 9 9v3h4V9c2-2 4-8-2-8z" fill="#fbe9b0" stroke="#a8802c" />
                        <path d="M9 13h4v2H9z" fill="#555" stroke="none" />
                    </Icon>
                </StatusButton>
                <span className="mx-1"><Caret small /></span>
                <StatusButton label="Clean screen"><Icon><path d="M2 2h12v12H2z" fill="#eee" /><path d="M2 3h12" strokeWidth="2" /></Icon></StatusButton>
                <span className="ml-[3px] mt-1">
                    <Icon w={14} h={14}><path d="M11 3h2M7 7h2M11 7h2M3 11h2M7 11h2M11 11h2" stroke="#ccc" strokeWidth="2" /></Icon>
                </span>
            </div>
        </div>
    );
}

/* ---------- Taskbar ---------- */

function TaskButton({ label, active = false, children }: { label: string; active?: boolean; children: ReactNode }) {
    return (
        <button
            className={`flex h-[26px] w-[149px] items-center gap-[3px] whitespace-nowrap rounded-sm border border-[#2a5cc8] px-2 ${
                active ? "bg-[#1a48b4]" : "bg-linear-to-b from-[#4a90fa] to-[#3474ea]"
            }`}
        >
            {children}
            {label}
        </button>
    );
}

function Taskbar() {
    return (
        <footer className="flex h-7 items-center bg-linear-to-b from-[#3c88f4] via-[#2860e0] to-[#2458d4] text-white">
            <button className="flex h-full w-[93px] items-center gap-1 rounded-r-lg bg-linear-to-b from-[#5cb45c] via-[#388c3c] to-[#2f7e34] pl-[6px] font-['Liberation_Sans',sans-serif] text-[15px] font-bold italic">
                <Icon w={18} h={18}>
                    <path d="M2 4c3-2 5-1 7 0L7 9C5 8 3 8 1 9z" fill="#e8502c" stroke="none" />
                    <path d="M10 4c2 1 4 1 7 0l-2 5c-2 1-5 1-7 0z" fill="#8cd848" stroke="none" />
                    <path d="M1 10c2-1 4-1 6 0l-2 5c-2-1-3-1-5 0z" fill="#5a90f0" stroke="none" />
                    <path d="M8 10c2 1 4 1 6 0l-1 5c-2 1-5 1-7 0z" fill="#f8d040" stroke="none" />
                </Icon>
                Inicio
            </button>
            <div className="flex w-[96px] items-center gap-[6px] pl-3">
                <Icon><rect x="1" y="2" width="13" height="12" rx="3" fill="#cfe6fa" stroke="#5a9ce0" /><path d="M5 11h6V5L5 9z" stroke="#2a68b8" strokeWidth="1.500" /></Icon>
                <Icon><circle cx="8" cy="8" r="5" fill="#f4f0e0" stroke="#e88038" strokeWidth="2" /><circle cx="9" cy="9" r="2.500" fill="#222" stroke="none" /><path d="M2 3l4 2" stroke="#e04040" strokeWidth="2" /></Icon>
                <Icon><path d="M13 11a5.500 5.500 0 1 1 0-4H4" stroke="#7cc8fa" strokeWidth="2.500" /><path d="M1 14C0 8 10 0 15 2" stroke="#f0c848" /></Icon>
                <span className="ml-1 self-start leading-3">»</span>
            </div>
            <div className="flex gap-[2px]">
                <TaskButton label="Autodesk AutoCAD 2..." active>
                    <Icon><rect width="16" height="16" fill="#a01818" stroke="none" /><path d="M7 2h3l4 12h-3l-1-3H6l-2 3H2z" fill="#f4583c" stroke="none" /></Icon>
                </TaskButton>
                <TaskButton label="Rendering Project">
                    <Icon><rect x="1" y="1" width="14" height="14" fill="#b8d870" stroke="#e8f0c0" /><path d="M2 2l5 3 7 9H5z" fill="#eaf4c0" stroke="none" /></Icon>
                </TaskButton>
                <TaskButton label="Recording...">
                    <Icon><circle cx="6" cy="4" r="3" fill="#888" stroke="#222" /><path d="M6 7l2 8" stroke="#222" strokeWidth="2" /><rect x="9" y="4" width="6" height="7" fill="#d02020" stroke="none" /></Icon>
                </TaskButton>
            </div>
            <div className="flex flex-1 justify-end pr-5">ES</div>
            <div className="flex h-full w-[160px] items-center gap-px border-l border-[#1868c8] bg-linear-to-b from-[#30b0f8] via-[#1490ec] to-[#1088e4]">
                <span className="-ml-2"><Icon><circle cx="8" cy="8" r="7" fill="#3c9cf4" stroke="#9cd0fc" /><path d="M9.500 4.500L6 8l3.500 3.500" stroke="#fff" strokeWidth="2" /></Icon></span>
                <Icon><circle cx="10" cy="6" r="5" fill="#3850c0" stroke="#c8d4f8" /><path d="M2 14l5-4" stroke="#ddd" strokeWidth="3" /></Icon>
                <Icon><rect x="1" y="2" width="13" height="13" fill="#b8d870" stroke="#e8f0c0" /><path d="M2 3l5 3 6 8H5z" fill="#eaf4c0" stroke="none" /></Icon>
                <Icon><path d="M3 5h3l5-3v11l-5-3H3z" fill="#b0b0b0" stroke="#555" /><path d="M13 5c2 2 2 4 0 6" stroke="#ccc" /></Icon>
                <Icon><path d="M8 1l2 5 5-1-4 4 3 5-5-2-4 3 1-5-5-2 5-1z" fill="#14406c" stroke="none" /></Icon>
                <Icon><circle cx="8" cy="8" r="7" fill="#f08c1c" stroke="#fcc070" /><circle cx="8" cy="8" r="3" stroke="#fff" strokeWidth="2" /></Icon>
                <span className="flex-1 whitespace-nowrap text-center">12:54 a.m.</span>
            </div>
        </footer>
    );
}

export default function App() {
    return (
        <div className="flex min-h-screen flex-col overflow-hidden border-t-[3px] border-black bg-[#666] font-['Liberation_Sans',sans-serif]">
            <TitleBar />
            <div className="flex flex-1 flex-col border-l-4 border-r-[5px] border-[#5a5a5a] font-['Noto_Sans',sans-serif] text-[10px] leading-[15px]">
                <RibbonTabs />
                <Ribbon />
                <FileTabs />
                <div className="flex flex-1 border-t-[3px] border-[#606060]">
                    <DrawingArea />
                    <div className="flex w-[17px] flex-col items-center bg-[#faf9f4]">
                        <ScrollArrow label="Scroll up" d="M1 6l3-4 3 4" />
                        <span className="h-[15px] w-4 rounded-sm border border-white bg-[#c4d4fa]" />
                        <div className="flex-1" />
                        <ScrollArrow label="Scroll down" d="M1 2l3 4 3-4" />
                    </div>
                </div>
                <LayoutTabs />
                <CommandLine />
                <StatusBar />
            </div>
            <div className="font-['Noto_Sans',sans-serif] text-[10px]">
                <Taskbar />
            </div>
        </div>
    );
}
